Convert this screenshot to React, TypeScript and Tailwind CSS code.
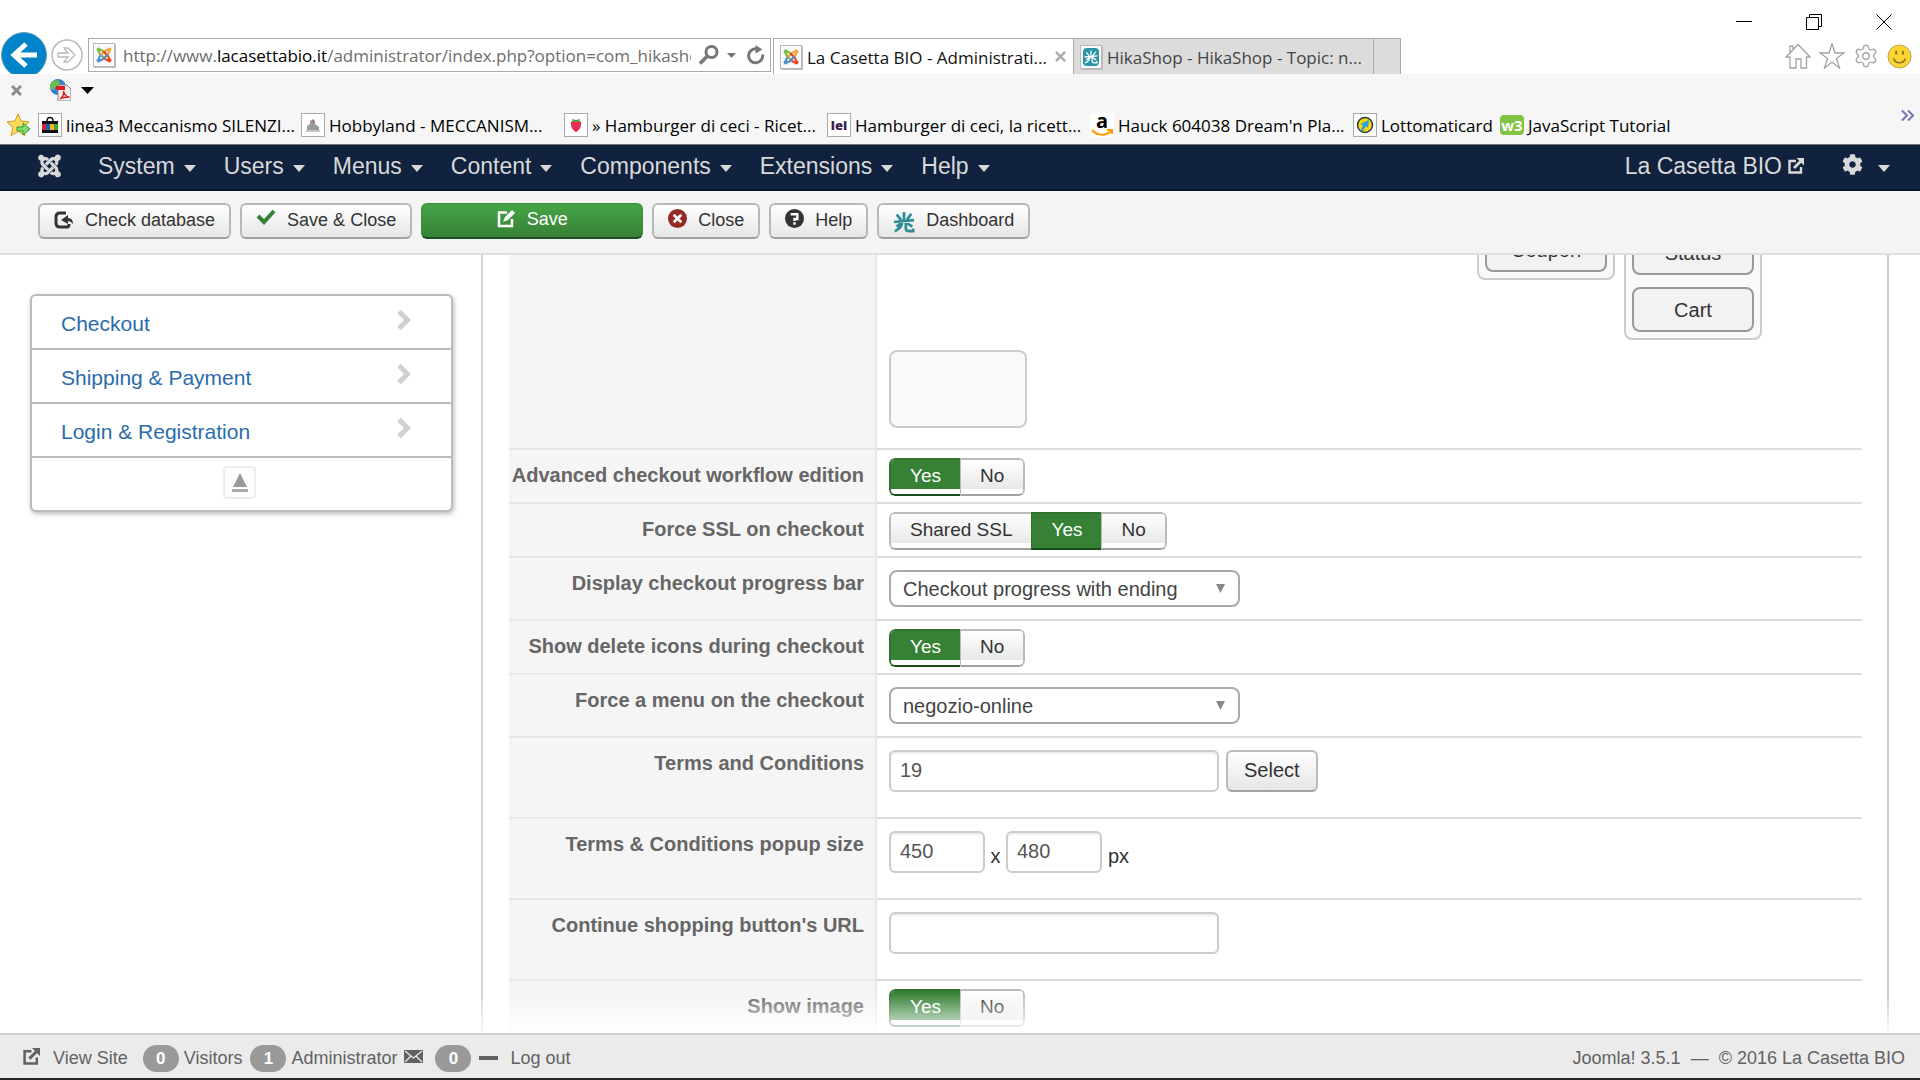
import type { ReactNode } from "react";
import { FaJoomla, FaCog } from "react-icons/fa";
import { Star, Settings } from "lucide-react";

function JoomlaColor() {
  const arm = "M4.5 4.5C3.5 9 5.5 10 7.5 12L13 17.5M4.5 4.5C9 3.5 10 5.5 12 7.5";
  const parts = [
    { color: "#7ac143", turn: "rotate(0 12 12)" },
    { color: "#f9a541", turn: "rotate(90 12 12)" },
    { color: "#f44321", turn: "rotate(180 12 12)" },
    { color: "#5091cd", turn: "rotate(270 12 12)" },
  ];
  return (
    <svg viewBox="0 0 24 24" className="h-[18px] w-4" aria-hidden="true">
      {parts.map((p) => (
        <g key={p.color} transform={p.turn}>
          <circle cx="4" cy="4" r="3.2" fill={p.color} />
          <path d={arm} fill="none" stroke={p.color} strokeWidth="3.4" />
        </g>
      ))}
    </svg>
  );
}

function PageIcon({ children }: { children: ReactNode }) {
  return (
    <span className="flex h-6 w-[22px] shrink-0 items-center justify-center border border-[#b8b8b8] bg-[#fafafa] shadow-[1px_1px_0_#bbb]">
      {children}
    </span>
  );
}

function HikaStar({ stroke, width }: { stroke: string; width: number }) {
  return (
    <svg viewBox="0 0 24 24" className="h-full w-full" fill="none" stroke={stroke} strokeWidth={width} aria-hidden="true">
      <path d="M12 1v10M4 4l5 6M20 3l-5 7M1 12l22-2M10 11c0 6-3 9-8 11M10 12L4 17M14 11v8c0 3 2 3 8 3v-3M14 12l7 5" />
    </svg>
  );
}

function Caret({ className }: { className: string }) {
  return (
    <svg viewBox="0 0 12 7" preserveAspectRatio="none" className={className} fill="currentColor" aria-hidden="true">
      <path d="M0 0h12L6 7z" />
    </svg>
  );
}

function ExternalIcon({ className }: { className: string }) {
  return (
    <svg viewBox="0 0 16 16" className={className} fill="none" stroke="currentColor" strokeWidth="2.4" aria-hidden="true">
      <path d="M8 3H1.500v11.500H13V9" />
      <path d="M6 10l7-7" strokeWidth="2.8" />
      <path d="M8.500 0H16v7.500z" fill="currentColor" stroke="none" />
    </svg>
  );
}

function WindowControls() {
  return (
    <div className="flex h-[37px] justify-end gap-[54px] pr-7 pt-[14px]">
      <button aria-label="Minimize" className="h-4 w-4">
        <svg viewBox="0 0 16 16" stroke="#000" fill="none"><path d="M0 7.500h16" /></svg>
      </button>
      <button aria-label="Restore" className="h-4 w-4">
        <svg viewBox="0 0 16 16" stroke="#000" fill="none"><path d="M.5 3.500h12v12H.5zM3.500 3.500v-3h12v12h-3" /></svg>
      </button>
      <button aria-label="Close window" className="h-4 w-4">
        <svg viewBox="0 0 16 16" stroke="#000" fill="none"><path d="M.5.500l15 15M15.500.500l-15 15" /></svg>
      </button>
    </div>
  );
}

function AddressRow() {
  return (
    <div className="flex h-[37px] items-start overflow-visible">
      <button aria-label="Back" className="-mt-[5px] h-[42px] w-[49px] shrink-0 overflow-hidden">
        <svg viewBox="0 0 49 42" aria-hidden="true">
          <circle cx="24" cy="23" r="22.500" fill="#0083c9" stroke="#6f9fb8" />
          <path d="M37 23H15M26 12L14 23l12 11" fill="none" stroke="#fff" strokeWidth="5" />
        </svg>
      </button>
      <button aria-label="Forward" className="ml-0.5 mt-0.5 h-8 w-8 shrink-0">
        <svg viewBox="0 0 32 32" fill="none" stroke="#b9b9b9" aria-hidden="true">
          <circle cx="16" cy="16" r="15" strokeWidth="1.500" />
          <path d="M7 14h10l-4-5h4l7 7-7 7h-4l4-5H7z" strokeWidth="1.300" />
        </svg>
      </button>
      <div className="ml-[5px] mt-px flex h-[34px] w-[683px] shrink-0 items-center border border-[#aaa] bg-white pl-1">
        <PageIcon><JoomlaColor /></PageIcon>
        <div className="ml-2 w-[568px] overflow-hidden whitespace-nowrap pt-0.5 text-[17px] text-[#6d6d6d]">
          http://www.<span className="text-black">lacasettabio.it</span>/administrator/index.php?option=com_hikasho
        </div>
        <button aria-label="Search" className="ml-2 h-5 w-5 shrink-0">
          <svg viewBox="0 0 20 20" fill="none" stroke="#777" strokeWidth="3"><circle cx="12.500" cy="7" r="5.500" /><path d="M8.500 11L1 18.500" strokeWidth="3.500" /></svg>
        </button>
        <Caret className="ml-2 h-[5px] w-[9px] text-[#777]" />
        <button aria-label="Refresh" className="ml-2.5 h-5 w-5 shrink-0">
          <svg viewBox="0 0 20 20" fill="none" stroke="#777" strokeWidth="3"><path d="M16.500 9.500A7 7 0 1 1 11 4" /><path d="M9.500 0l7 4.500-7 4z" fill="#777" stroke="none" /></svg>
        </button>
      </div>
      <div className="ml-0.5 mt-px flex h-9 w-[300px] shrink-0 items-center border-l border-t border-[#aaa] bg-white pl-1.5">
        <PageIcon><JoomlaColor /></PageIcon>
        <span className="ml-[5px] w-[248px] whitespace-nowrap pt-0.5 text-[17px] text-[#111]">La Casetta BIO - Administrati...</span>
        <button aria-label="Close tab" className="h-[11px] w-[11px]">
          <svg viewBox="0 0 12 12" stroke="#aaa" strokeWidth="2.500"><path d="M1 1l10 10M11 1L1 11" /></svg>
        </button>
      </div>
      <div className="mt-px flex h-9 w-[300px] shrink-0 items-center border-l border-t border-[#aaa] bg-[#dcdcdc] pl-1.5">
        <PageIcon>
          <span className="h-[18px] w-4 rounded-sm bg-[#2b95a5] p-px"><HikaStar stroke="#fff" width={2.2} /></span>
        </PageIcon>
        <span className="ml-[5px] whitespace-nowrap pt-0.5 text-[17px] text-[#444]">HikaShop - HikaShop - Topic: n...</span>
      </div>
      <button aria-label="New tab" className="mt-px h-9 w-7 shrink-0 border-x border-t border-[#aaa] bg-[#dcdcdc]" />
      <div className="ml-auto flex items-center gap-2 pr-2 pt-[6px] text-[#a3a3a3]">
        <button aria-label="Home">
          <svg viewBox="0 0 26 26" className="h-[26px] w-[26px]" fill="none" stroke="currentColor" strokeWidth="1.300"><path d="M1 14L13 1.500l12 12.500h-3.500v11H16v-9h-5v9H5V14zM5 9V3h3v3" /></svg>
        </button>
        <button aria-label="Favorites">
          <svg viewBox="0 0 26 26" className="h-[26px] w-[26px]" fill="none" stroke="currentColor" strokeWidth="1.300"><path d="M13 1l3 9h9l-7.500 5.500 3 9.500L13 19l-7.500 6 3-9.500L1 10h9z" /></svg>
        </button>
        <button aria-label="Tools"><Settings size={26} strokeWidth={1.2} /></button>
        <button aria-label="Feedback">
          <svg viewBox="0 0 26 26" className="h-[25px] w-[25px]"><circle cx="13" cy="13" r="12" fill="#fcd535" stroke="#b5a05a" /><path d="M7 15c2 6 10 6 12 0" fill="none" stroke="#8a7420" strokeWidth="1.800" /><path d="M9.500 7v4M16.500 7v4" stroke="#8a7420" strokeWidth="2" /></svg>
        </button>
      </div>
    </div>
  );
}

function Framed({ children }: { children: ReactNode }) {
  return <span className="flex h-6 w-6 shrink-0 items-center justify-center border border-[#aaa] bg-white">{children}</span>;
}

const favorites: { text: string; width: string; icon: ReactNode }[] = [
  {
    text: "linea3 Meccanismo SILENZI...",
    width: "w-[263px]",
    icon: (
      <Framed>
        <svg viewBox="0 0 18 18" className="h-[18px] w-[18px]"><path d="M6 5a3 3.500 0 0 1 6 0" fill="none" stroke="#111" strokeWidth="1.500" /><path d="M1 5h16v12H1z" fill="#111" /><path d="M1 8h4v6H1z" fill="#d8232a" /><path d="M5 8h4v6H5z" fill="#1b62b5" /><path d="M9 8h4v6H9z" fill="#f2b61b" /><path d="M13 8h4v6h-4z" fill="#4ca22e" /></svg>
      </Framed>
    ),
  },
  {
    text: "Hobbyland - MECCANISM...",
    width: "w-[263px]",
    icon: (
      <Framed>
        <svg viewBox="0 0 16 16" className="h-4 w-4"><path d="M2 9l3-2V4l3-2 2 2v3l4 3v4H2z" fill="#9a9a9a" /><path d="M7 3l3 1-2 2z" fill="#b5636a" /><path d="M1 13h14v2H1z" fill="#c5c5c5" /></svg>
      </Framed>
    ),
  },
  {
    text: "» Hamburger di ceci - Ricet...",
    width: "w-[263px]",
    icon: (
      <Framed>
        <svg viewBox="0 0 16 16" className="h-4 w-4"><path d="M3 5c3-2 8-2 10 0 1 4-2 9-5 10-3-1-6-6-5-10z" fill="#ea2b52" /><path d="M4 2l4 1 4-1-1 3H5z" fill="#48a03c" /></svg>
      </Framed>
    ),
  },
  {
    text: "Hamburger di ceci, la ricett...",
    width: "w-[263px]",
    icon: <Framed><span className="text-[13px] font-black leading-none text-[#3d1c50]">lei</span></Framed>,
  },
  {
    text: "Hauck 604038 Dream'n Pla...",
    width: "w-[263px]",
    icon: (
      <span className="flex h-6 w-6 shrink-0 flex-col items-center bg-white">
        <span className="text-xl font-bold leading-[16px] text-black">a</span>
        <svg viewBox="0 0 24 8" className="h-2 w-6"><path d="M2 1c5 6 14 6 19 1M17 1h5v4" fill="none" stroke="#f90" strokeWidth="2" /></svg>
      </span>
    ),
  },
  {
    text: "Lottomaticard",
    width: "w-[147px]",
    icon: (
      <Framed>
        <svg viewBox="0 0 18 18" className="h-[18px] w-[18px]"><circle cx="9" cy="9" r="7.500" fill="#ffd800" stroke="#1f3b5c" strokeWidth="1.500" /><path d="M13 4L4 8l3 1-2 5 2 1 3-5 2 2z" fill="#2aa1dc" /></svg>
      </Framed>
    ),
  },
  {
    text: "JavaScript Tutorial",
    width: "w-auto",
    icon: (
      <span className="flex h-5 w-6 shrink-0 items-center justify-center rounded-sm bg-[#82c341] text-[15px] font-bold leading-none text-white">w3</span>
    ),
  },
];

function Browser() {
  return (
    <header className="bg-white font-['Open_Sans',sans-serif]">
      <WindowControls />
      <AddressRow />
      <div className="bg-[#f6f6f6]">
        <div className="flex h-8 items-center pl-[11px]">
          <button aria-label="Close toolbar" className="h-[11px] w-[11px]">
            <svg viewBox="0 0 11 11" stroke="#8c8c8c" strokeWidth="3"><path d="M1 1l9 9M10 1l-9 9" /></svg>
          </button>
          <button aria-label="Convert to PDF" className="ml-[27px] h-[22px] w-[22px]">
            <svg viewBox="0 0 22 22"><circle cx="9" cy="8" r="8" fill="#3b7fd0" /><path d="M3 3c4-3 7-2 8 1-2 4-5 2-6 7-5-1-5-5-2-8z" fill="#69c04a" /><path d="M9 6h9l4 4v12H9z" fill="#eee" stroke="#888" /><path d="M7 7h9v4H7z" fill="#e01b1b" /><path d="M11 20c3-2 4-5 3.500-8 1 4 3 6 6 6-4 0-7 0-9.500 2z" fill="none" stroke="#e01b1b" strokeWidth="1.300" /></svg>
          </button>
          <button aria-label="PDF options" className="ml-2.5"><Caret className="h-[7px] w-[13px] text-black" /></button>
        </div>
        <div className="flex h-[38px] items-center pl-[7px]">
          <button aria-label="Add to favorites" className="mr-[7px] h-6 w-6 shrink-0">
            <svg viewBox="0 0 24 24"><path d="M11 1l3 7 8 1-6 5.500 2 8-7-4-7 4 2-8L0 9l8-1z" fill="#ffdc5e" stroke="#d19a1b" /><path d="M10 14h6v-4l7 6-7 6v-4h-6z" fill="#7ddc6c" stroke="#2e9a32" /></svg>
          </button>
          {favorites.map((f) => (
            <a key={f.text} href="#" className={`${f.width} flex shrink-0 items-center gap-1 whitespace-nowrap text-[17px] text-black`}>
              {f.icon}
              <span className="pt-0.5">{f.text}</span>
            </a>
          ))}
          <button aria-label="More favorites" className="mb-5 ml-auto mr-1.5 h-[13px] w-[13px]">
            <svg viewBox="0 0 13 13" fill="none" stroke="#7472b5" strokeWidth="2"><path d="M1 1.500l5 5-5 5M7 1.500l5 5-5 5" /></svg>
          </button>
        </div>
      </div>
    </header>
  );
}

function AdminNav() {
  return (
    <nav className="flex h-[47px] items-start border-b-2 border-t border-b-[#0a1628] border-t-[#777] bg-[#10223e] pt-1 text-[23px] leading-[34px] text-[#d9d9d9]">
      <a href="#" aria-label="Joomla" className="ml-9 mr-[35px] mt-1"><FaJoomla className="h-[26px] w-[27px]" /></a>
      {["System", "Users", "Menus", "Content", "Components", "Extensions", "Help"].map((m) => (
        <button key={m} className="mr-7 flex items-center">
          {m}
          <Caret className="ml-[9px] mt-1 h-[7px] w-3" />
        </button>
      ))}
      <a href="#" className="ml-auto flex items-center">La Casetta BIO<ExternalIcon className="ml-1.5 h-4 w-4" /></a>
      <button aria-label="User menu" className="ml-[38px] mr-[30px] flex h-[34px] items-center">
        <FaCog className="mb-1 h-[21px] w-[21px]" />
        <Caret className="ml-[15px] mt-1 h-[7px] w-3" />
      </button>
    </nav>
  );
}

function ToolButton({ icon, label }: { icon: ReactNode; label: string }) {
  return (
    <button className="flex h-9 items-center gap-[11px] rounded-md border-2 border-[#b8b8b8] border-b-[#a0a0a0] bg-linear-to-b from-white to-[#e6e6e6] px-3.5 pb-0.5 text-[18px] text-[#333]">
      {icon}
      {label}
    </button>
  );
}

function Toolbar() {
  return (
    <div className="flex h-16 items-start gap-[9px] border-b-2 border-[#e0e0e0] bg-[#f4f4f4] pl-[38px] pt-3">
      <ToolButton
        label="Check database"
        icon={<svg viewBox="0 0 20 18" className="h-[18px] w-5" fill="none" stroke="#333" strokeWidth="3"><path d="M12 2H6Q2 2 2 6v6q0 4 4 4h7q2 0 2-3" /><path d="M7 9l7-5v3q5 0 5 6-2-3-5-3v3z" fill="#333" stroke="none" /></svg>}
      />
      <ToolButton
        label="Save & Close"
        icon={<svg viewBox="0 0 20 18" className="mb-1 h-[18px] w-5" fill="none" stroke="#378137" strokeWidth="4"><path d="M2 7l6 6L18 2" /></svg>}
      />
      <button className="flex h-9 w-[222px] items-center justify-center gap-3 rounded-md border border-b-2 border-[#3a8a3c] border-b-[#1e4f20] bg-linear-to-b from-[#46a546] to-[#378137] pb-0.5 text-[18px] text-white">
        <svg viewBox="0 0 18 18" className="mb-0.5 h-[18px] w-[18px]" fill="none" stroke="#fff" strokeWidth="2.500"><path d="M10 2.500H2v13.500h13V9" /><path d="M6 12l2-5 7-7 3 3-7 7z" fill="#fff" stroke="none" /></svg>
        Save
      </button>
      <ToolButton
        label="Close"
        icon={<svg viewBox="0 0 20 20" className="mb-1 h-[19px] w-[19px]"><circle cx="10" cy="10" r="10" fill="#942a25" /><path d="M6 6l8 8M14 6l-8 8" stroke="#fff" strokeWidth="2.800" /></svg>}
      />
      <ToolButton
        label="Help"
        icon={<svg viewBox="0 0 20 20" className="mb-1 h-[19px] w-[19px]"><circle cx="10" cy="10" r="10" fill="#333" /><path d="M6 5.500h7v5h-3v2M10 14v2.500" fill="none" stroke="#fff" strokeWidth="2.500" /></svg>}
      />
      <ToolButton label="Dashboard" icon={<span className="mt-1 h-[22px] w-[22px]"><HikaStar stroke="#2f8c96" width={3} /></span>} />
    </div>
  );
}

function Sidebar() {
  return (
    <aside className="w-[483px] shrink-0 border-r-2 border-[#d4d4d4] pl-[30px] pr-7 pt-[39px]">
      <nav className="rounded-md border-2 border-[#bbb] bg-white shadow-[1px_2px_5px_#bbb]">
        {["Checkout", "Shipping & Payment", "Login & Registration"].map((t) => (
          <a key={t} href="#" className="flex h-[54px] items-center justify-between border-b-2 border-[#bbb] pl-[29px] pr-10 pt-1 text-[21px] leading-6 text-[#2a6bab]">
            {t}
            <svg viewBox="0 0 14 22" className="mb-2 h-[22px] w-3.5" fill="none" stroke="#d0d0d0" strokeWidth="5" aria-hidden="true"><path d="M2 2.500L10.500 11 2 19.500" /></svg>
          </a>
        ))}
        <div className="flex h-[52px] justify-center pt-2">
          <button aria-label="Collapse" className="mr-1 flex h-[33px] w-[33px] items-center justify-center rounded border-2 border-[#eee] bg-[#fcfcfc]">
            <svg viewBox="0 0 16 20" className="h-5 w-4"><path d="M8 0l7 14H1z" fill="#999" /><path d="M0 16h16v3H0z" fill="#aaa" /></svg>
          </button>
        </div>
      </nav>
    </aside>
  );
}

function Segmented({ name, options, active, filled = false }: { name: string; options: string[]; active: string; filled?: boolean }) {
  return (
    <div role="radiogroup" aria-label={name} className="flex h-[38px] overflow-hidden rounded-md text-[19px]">
      {options.map((o, i) => {
        const on = o === active;
        const edge = `${i === 0 ? "rounded-l-md border-l-2" : "border-l"} ${i === options.length - 1 ? "rounded-r-md border-r-2" : ""}`;
        const tone = on
          ? "border-[#32722f] border-b-[#1a4d1c] text-white"
          : "border-[#bbb] border-b-[#a2a2a2] text-[#333]";
        const fill = on ? "bg-[#378137]" : "bg-linear-to-b from-white to-[#e8e8e8]";
        return (
          <label key={o} className={`relative flex flex-col overflow-hidden border-y-2 bg-white ${edge} ${tone}`}>
            <input type="radio" name={name} defaultChecked={on} className="sr-only" />
            <span className={`${on && filled ? "h-[34px] pb-1" : "h-[29px]"} ${fill} flex items-center px-[19px] pt-[3px]`}>{o}</span>
          </label>
        );
      })}
    </div>
  );
}

function Row({ label, height, children, last = false }: { label: string; height: string; children: ReactNode; last?: boolean }) {
  return (
    <div className={`flex ${height}`}>
      <div className={`w-[368px] shrink-0 border-r-2 border-r-[#e8e8e8] bg-[#f5f5f5] pr-[11px] pt-[13px] text-right text-[20px] font-bold leading-6 text-[#666] ${last ? "" : "border-b-2 border-b-[#e8e8e8]"}`}>
        {label}
      </div>
      <div className={`flex flex-1 items-start pl-3 ${last ? "" : "border-b-2 border-[#dcdcdc]"}`}>{children}</div>
    </div>
  );
}

function Dropdown({ label, value }: { label: string; value: string }) {
  return (
    <div className="relative mt-3 text-[#444]">
      <select aria-label={label} className="h-[37px] w-[351px] appearance-none rounded-lg border-2 border-[#aaa] bg-white pl-3 text-[20px] leading-6">
        <option>{value}</option>
      </select>
      <Caret className="pointer-events-none absolute right-[15px] top-[14px] h-[9px] w-[9px] text-[#888]" />
    </div>
  );
}

function TextBox({ label, value, width }: { label: string; value: string; width: string }) {
  return (
    <input
      aria-label={label}
      defaultValue={value}
      className={`${width} mt-3 h-[42px] rounded-md border-2 border-[#ccc] bg-white pb-0.5 pl-[9px] text-[20px] text-[#555] shadow-[inset_0_2px_2px_#eee]`}
    />
  );
}

function Block({ children }: { children: string }) {
  return (
    <button className="h-[45px] w-full shrink-0 rounded-lg border-2 border-[#999] bg-[#f2f2f2] text-[20px] leading-6 text-[#333]">{children}</button>
  );
}

function Main() {
  return (
    <main className="mr-[31px] min-w-0 flex-1 border-r-2 border-[#ccc] pl-[26px] pr-[25px]">
      <div className="-mt-9">
        <Row label="" height="h-[231px]">
          <div className="grid grid-cols-[repeat(6,138px)] items-start gap-x-[9px]">
            <div className="col-start-5 rounded-lg border-2 border-[#ccc] bg-[#f9f9f9] p-1.5"><Block>Coupon</Block></div>
            <div className="col-start-6 flex flex-col gap-3 rounded-lg border-2 border-[#ccc] bg-[#f9f9f9] px-1.5 pb-1.5 pt-[9px]">
              <Block>Status</Block>
              <Block>Cart</Block>
            </div>
            <div className="col-start-1 mt-2.5 h-[78px] rounded-lg border-2 border-[#ccc] bg-[#f9f9f9]" />
          </div>
        </Row>
        <Row label="Advanced checkout workflow edition" height="h-[54px]">
          <div className="mt-2"><Segmented name="Advanced checkout workflow edition" options={["Yes", "No"]} active="Yes" /></div>
        </Row>
        <Row label="Force SSL on checkout" height="h-[54px]">
          <div className="mt-2"><Segmented name="Force SSL on checkout" options={["Shared SSL", "Yes", "No"]} active="Yes" filled /></div>
        </Row>
        <Row label="Display checkout progress bar" height="h-[63px]">
          <Dropdown label="Display checkout progress bar" value="Checkout progress with ending" />
        </Row>
        <Row label="Show delete icons during checkout" height="h-[54px]">
          <div className="mt-2"><Segmented name="Show delete icons during checkout" options={["Yes", "No"]} active="Yes" /></div>
        </Row>
        <Row label="Force a menu on the checkout" height="h-[63px]">
          <Dropdown label="Force a menu on the checkout" value="negozio-online" />
        </Row>
        <Row label="Terms and Conditions" height="h-[81px]">
          <TextBox label="Terms and Conditions" value="19" width="w-[330px]" />
          <button className="ml-[7px] mt-3 h-[42px] rounded-md border-2 border-[#bbb] border-b-[#a2a2a2] bg-linear-to-b from-white to-[#e6e6e6] px-4 pb-0.5 text-[20px] text-[#333]">Select</button>
        </Row>
        <Row label="Terms & Conditions popup size" height="h-[81px]">
          <TextBox label="Popup width" value="450" width="w-24" />
          <span className="w-[21px] pt-[25px] text-center text-[20px] leading-6 text-[#333]">x</span>
          <TextBox label="Popup height" value="480" width="w-24" />
          <span className="ml-1.5 pt-[25px] text-[20px] leading-6 text-[#333]">px</span>
        </Row>
        <Row label="Continue shopping button's URL" height="h-[81px]">
          <TextBox label="Continue shopping button's URL" value="" width="w-[330px]" />
        </Row>
        <Row label="Show image" height="h-[60px]" last>
          <div className="mt-2"><Segmented name="Show image" options={["Yes", "No"]} active="Yes" /></div>
        </Row>
      </div>
    </main>
  );
}

function Badge({ children }: { children: string }) {
  return <span className="flex h-[27px] w-9 items-center justify-center rounded-full bg-[#999] text-[17px] font-bold text-white">{children}</span>;
}

function StatusBar() {
  return (
    <footer className="flex h-[47px] shrink-0 items-center justify-between border-b-2 border-t-2 border-b-[#26262a] border-t-[#d0d0d0] bg-[#ebebeb] pl-[23px] pr-[15px] pt-1 text-[18px] text-[#626262]">
      <div className="flex items-center">
        <a href="#" className="mr-[15px] flex items-center gap-[13px]"><ExternalIcon className="mb-1 h-[17px] w-[17px]" />View Site</a>
        <Badge>0</Badge>
        <span className="ml-[5px] mr-2">Visitors</span>
        <Badge>1</Badge>
        <span className="ml-[5px]">Administrator</span>
        <svg viewBox="0 0 19 13" className="mb-1 ml-[7px] mr-3 h-[13px] w-[19px]" aria-hidden="true"><path d="M0 0h19v13H0z" fill="#626262" /><path d="M1 1l8.500 7L18 1M1 12l6-6M18 12l-6-6" fill="none" stroke="#ebebeb" strokeWidth="1.200" /></svg>
        <Badge>0</Badge>
        <a href="#" className="ml-2 flex items-center gap-3"><span className="mb-0.5 h-1 w-[19px] bg-[#626262]" />Log out</a>
      </div>
      <p className="whitespace-pre">Joomla! 3.5.1  —  © 2016 La Casetta BIO</p>
    </footer>
  );
}

export default function App() {
  return (
    <div className="flex h-screen flex-col overflow-hidden bg-white font-['Liberation_Sans',Arial,sans-serif]">
      <Browser />
      <AdminNav />
      <Toolbar />
      <div className="relative flex min-h-0 flex-1 overflow-hidden">
        <Sidebar />
        <Main />
        <div className="pointer-events-none absolute inset-x-0 bottom-0 h-10 bg-linear-to-b from-transparent to-white/90" />
      </div>
      <StatusBar />
    </div>
  );
}
